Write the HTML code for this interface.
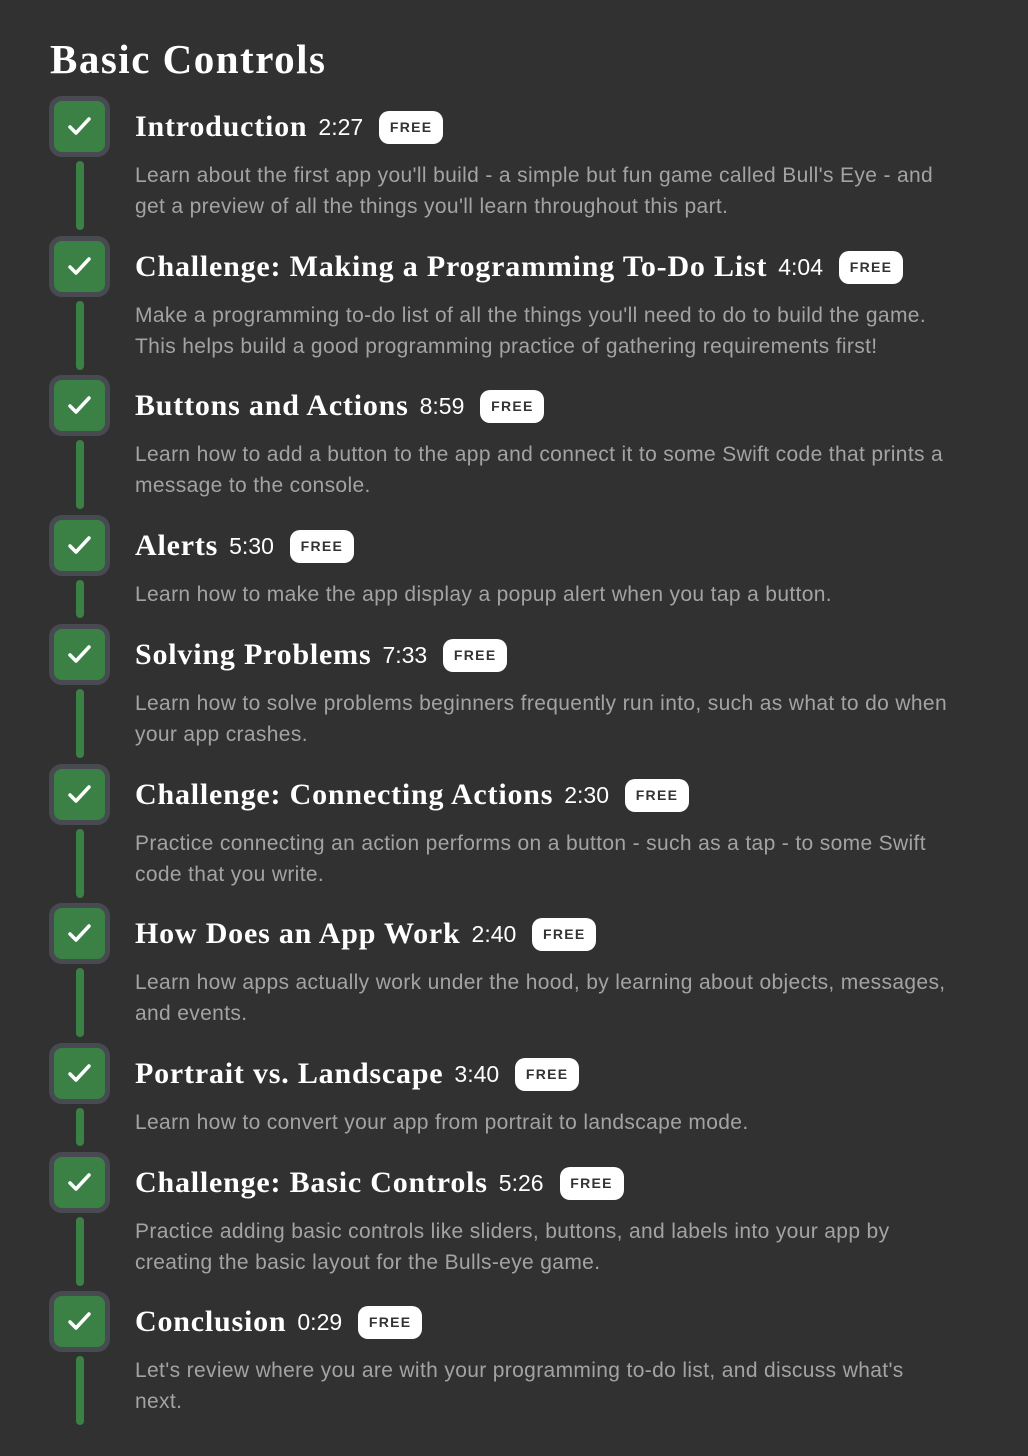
<!DOCTYPE html>
<html><head><meta charset="utf-8"><style>
body{margin:0;background:#313131;width:1028px;height:1456px;overflow:hidden;font-family:"Liberation Sans",sans-serif}
h1{position:absolute;left:50px;top:31px;margin:0;font:bold 41px/56px "Liberation Serif",serif;color:#fff;letter-spacing:1.5px}
.it{position:absolute;left:0;width:1028px}
.box{position:absolute;left:49px;top:0;width:51px;height:51px;border:5px solid #474b51;border-radius:13px;background:#3b8146}
.box svg{position:absolute;left:13px;top:13px}
.ln{position:absolute;left:76px;top:65px;width:8px;border-radius:4px;background:#3b8146}
.hd{position:absolute;left:135px;top:13px;height:36px;display:flex;align-items:center;white-space:nowrap}
.t{font:bold 30px "Liberation Serif",serif;color:#fff;letter-spacing:0.8px}
.tm{font-size:23px;color:#fff;margin-left:11px}
.fr{margin-left:16px;background:#fff;color:#333;border-radius:10px;height:33px;width:64px;display:flex;align-items:center;justify-content:center;font-size:14px;font-weight:bold;letter-spacing:1.3px}
.d{position:absolute;left:135px;top:64px;font-size:21px;letter-spacing:0.35px;line-height:31px;color:#a3a3a3;white-space:nowrap}
</style></head><body>
<h1>Basic Controls</h1>

<div class="it" style="top:96px"><div class="box"><svg width="25" height="25" viewBox="0 0 25 25"><path d="M3 13l6 6L22 5" fill="none" stroke="#fff" stroke-width="3.5" stroke-linecap="round" stroke-linejoin="round"/></svg></div><div class="ln" style="height:69px"></div>
<div class="hd"><span class="t">Introduction</span><span class="tm">2:27</span><span class="fr">FREE</span></div>
<div class="d">Learn about the first app you'll build - a simple but fun game called Bull's Eye - and<br>get a preview of all the things you'll learn throughout this part.</div></div>

<div class="it" style="top:236px"><div class="box"><svg width="25" height="25" viewBox="0 0 25 25"><path d="M3 13l6 6L22 5" fill="none" stroke="#fff" stroke-width="3.5" stroke-linecap="round" stroke-linejoin="round"/></svg></div><div class="ln" style="height:69px"></div>
<div class="hd"><span class="t">Challenge: Making a Programming To-Do List</span><span class="tm">4:04</span><span class="fr">FREE</span></div>
<div class="d">Make a programming to-do list of all the things you'll need to do to build the game.<br>This helps build a good programming practice of gathering requirements first!</div></div>

<div class="it" style="top:375px"><div class="box"><svg width="25" height="25" viewBox="0 0 25 25"><path d="M3 13l6 6L22 5" fill="none" stroke="#fff" stroke-width="3.5" stroke-linecap="round" stroke-linejoin="round"/></svg></div><div class="ln" style="height:69px"></div>
<div class="hd"><span class="t">Buttons and Actions</span><span class="tm">8:59</span><span class="fr">FREE</span></div>
<div class="d">Learn how to add a button to the app and connect it to some Swift code that prints a<br>message to the console.</div></div>

<div class="it" style="top:515px"><div class="box"><svg width="25" height="25" viewBox="0 0 25 25"><path d="M3 13l6 6L22 5" fill="none" stroke="#fff" stroke-width="3.5" stroke-linecap="round" stroke-linejoin="round"/></svg></div><div class="ln" style="height:38px"></div>
<div class="hd"><span class="t">Alerts</span><span class="tm">5:30</span><span class="fr">FREE</span></div>
<div class="d">Learn how to make the app display a popup alert when you tap a button.</div></div>

<div class="it" style="top:624px"><div class="box"><svg width="25" height="25" viewBox="0 0 25 25"><path d="M3 13l6 6L22 5" fill="none" stroke="#fff" stroke-width="3.5" stroke-linecap="round" stroke-linejoin="round"/></svg></div><div class="ln" style="height:69px"></div>
<div class="hd"><span class="t">Solving Problems</span><span class="tm">7:33</span><span class="fr">FREE</span></div>
<div class="d">Learn how to solve problems beginners frequently run into, such as what to do when<br>your app crashes.</div></div>

<div class="it" style="top:764px"><div class="box"><svg width="25" height="25" viewBox="0 0 25 25"><path d="M3 13l6 6L22 5" fill="none" stroke="#fff" stroke-width="3.5" stroke-linecap="round" stroke-linejoin="round"/></svg></div><div class="ln" style="height:69px"></div>
<div class="hd"><span class="t">Challenge: Connecting Actions</span><span class="tm">2:30</span><span class="fr">FREE</span></div>
<div class="d">Practice connecting an action performs on a button - such as a tap - to some Swift<br>code that you write.</div></div>

<div class="it" style="top:903px"><div class="box"><svg width="25" height="25" viewBox="0 0 25 25"><path d="M3 13l6 6L22 5" fill="none" stroke="#fff" stroke-width="3.5" stroke-linecap="round" stroke-linejoin="round"/></svg></div><div class="ln" style="height:69px"></div>
<div class="hd"><span class="t">How Does an App Work</span><span class="tm">2:40</span><span class="fr">FREE</span></div>
<div class="d">Learn how apps actually work under the hood, by learning about objects, messages,<br>and events.</div></div>

<div class="it" style="top:1043px"><div class="box"><svg width="25" height="25" viewBox="0 0 25 25"><path d="M3 13l6 6L22 5" fill="none" stroke="#fff" stroke-width="3.5" stroke-linecap="round" stroke-linejoin="round"/></svg></div><div class="ln" style="height:38px"></div>
<div class="hd"><span class="t">Portrait vs. Landscape</span><span class="tm">3:40</span><span class="fr">FREE</span></div>
<div class="d">Learn how to convert your app from portrait to landscape mode.</div></div>

<div class="it" style="top:1152px"><div class="box"><svg width="25" height="25" viewBox="0 0 25 25"><path d="M3 13l6 6L22 5" fill="none" stroke="#fff" stroke-width="3.5" stroke-linecap="round" stroke-linejoin="round"/></svg></div><div class="ln" style="height:69px"></div>
<div class="hd"><span class="t">Challenge: Basic Controls</span><span class="tm">5:26</span><span class="fr">FREE</span></div>
<div class="d">Practice adding basic controls like sliders, buttons, and labels into your app by<br>creating the basic layout for the Bulls-eye game.</div></div>

<div class="it" style="top:1291px"><div class="box"><svg width="25" height="25" viewBox="0 0 25 25"><path d="M3 13l6 6L22 5" fill="none" stroke="#fff" stroke-width="3.5" stroke-linecap="round" stroke-linejoin="round"/></svg></div><div class="ln" style="height:69px"></div>
<div class="hd"><span class="t">Conclusion</span><span class="tm">0:29</span><span class="fr">FREE</span></div>
<div class="d">Let's review where you are with your programming to-do list, and discuss what's<br>next.</div></div>
</body></html>
